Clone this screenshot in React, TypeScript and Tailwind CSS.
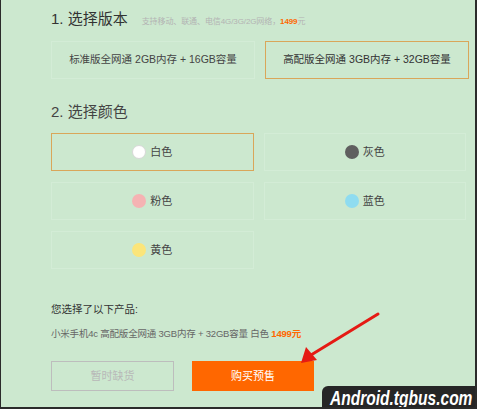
import React, {useState} from "react";

const versions = [
    "标准版全网通 2GB内存 + 16GB容量",
    "高配版全网通 3GB内存 + 32GB容量",
];

const colors = [
    {name: "白色", dot: "bg-white border border-[#d8d8d8]"},
    {name: "灰色", dot: "bg-[#5f5f5f]"},
    {name: "粉色", dot: "bg-[#f5b3b3]"},
    {name: "蓝色", dot: "bg-[#8fdcf0]"},
    {name: "黄色", dot: "bg-[#fbe57a]"},
];

const App: React.FC = () => {
    const [version, setVersion] = useState(1);
    const [color, setColor] = useState(0);

    return (
        <div
            className="relative w-[477px] h-[409px] overflow-hidden bg-[#cce8cf] border-l border-r-2 border-b-2 border-[#2b2b2b] text-[#333]"
            style={{fontFamily: '"Liberation Sans", "Noto Sans CJK SC", sans-serif'}}>
            <div className="flex flex-col pl-[50px] pt-[7px]">
                <div className="flex items-baseline h-[24px]">
                    <h2 className="text-[15px] leading-[24px] text-[#333]">1. 选择版本</h2>
                    <span className="ml-[14px] text-[8px] tracking-[-0.1px] text-[#b3b3b3]">
                        支持移动、联通、电信4G/3G/2G网络，
                        <b className="text-[#ff6700]">1499</b>元
                    </span>
                </div>

                <div className="flex gap-[10px] mt-[10px]">
                    {versions.map((v, i) => (
                        <button
                            key={v}
                            onClick={() => setVersion(i)}
                            className={
                                i === version
                                    ? "w-[204px] h-[38px] border border-[#d9a65a] text-[10.5px] text-[#333]"
                                    : "w-[204px] h-[38px] border border-[#d3ecd6] text-[10.5px] text-[#444]"
                            }>
                            {v}
                        </button>
                    ))}
                </div>

                <h2 className="mt-[21px] text-[15px] leading-[24px] text-[#444]">2. 选择颜色</h2>

                <div className="grid grid-cols-2 w-[415px] gap-x-[10px] gap-y-[11px] mt-[9px]">
                    {colors.map((c, i) => (
                        <button
                            key={c.name}
                            onClick={() => setColor(i)}
                            className={
                                i === color
                                    ? "flex items-center justify-center gap-[4px] h-[38px] border border-[#d9a65a]"
                                    : "flex items-center justify-center gap-[4px] h-[38px] border border-[#d3ecd6]"
                            }>
                            <span className={"w-[14px] h-[14px] rounded-full " + c.dot} />
                            <span className="text-[11px] text-[#444]">{c.name}</span>
                        </button>
                    ))}
                </div>

                <p className="mt-[31px] text-[10.5px] leading-[18px] text-[#333]">您选择了以下产品:</p>
                <p className="mt-[7px] text-[9.5px] tracking-[-0.2px] leading-[18px] text-[#666]">
                    小米手机4c 高配版全网通 3GB内存 + 32GB容量 白色{" "}
                    <b className="text-[#ff6700]">1499元</b>
                </p>

                <div className="flex gap-[18px] mt-[18px]">
                    <button className="w-[123px] h-[30px] border border-[#bdbdbd] text-[11px] text-[#b8b8b8]">
                        暂时缺货
                    </button>
                    <button className="w-[122px] h-[30px] bg-[#ff6700] text-[11px] text-white">
                        购买预售
                    </button>
                </div>
            </div>

            {/* annotation arrow */}
            <svg
                className="absolute left-0 top-0 pointer-events-none"
                width="477"
                height="409">
                <line x1="377" y1="314" x2="310" y2="355" stroke="#e51a14" strokeWidth="3" strokeLinecap="round" />
                <polygon points="300,363 305,347 316,360" fill="#e51a14" />
            </svg>

            {/* watermark */}
            <div className="absolute left-[321px] top-[386px] w-[160px] h-[25px] bg-[#262626] rounded-t-[6px] pl-[8px]">
                <span
                    className="block origin-left scale-x-[0.74] text-[21px] leading-[24px] font-bold italic text-white whitespace-nowrap"
                    style={{fontFamily: '"Liberation Sans", sans-serif'}}>
                    Android.tgbus.com
                </span>
            </div>
        </div>
    );
};

export default App;
